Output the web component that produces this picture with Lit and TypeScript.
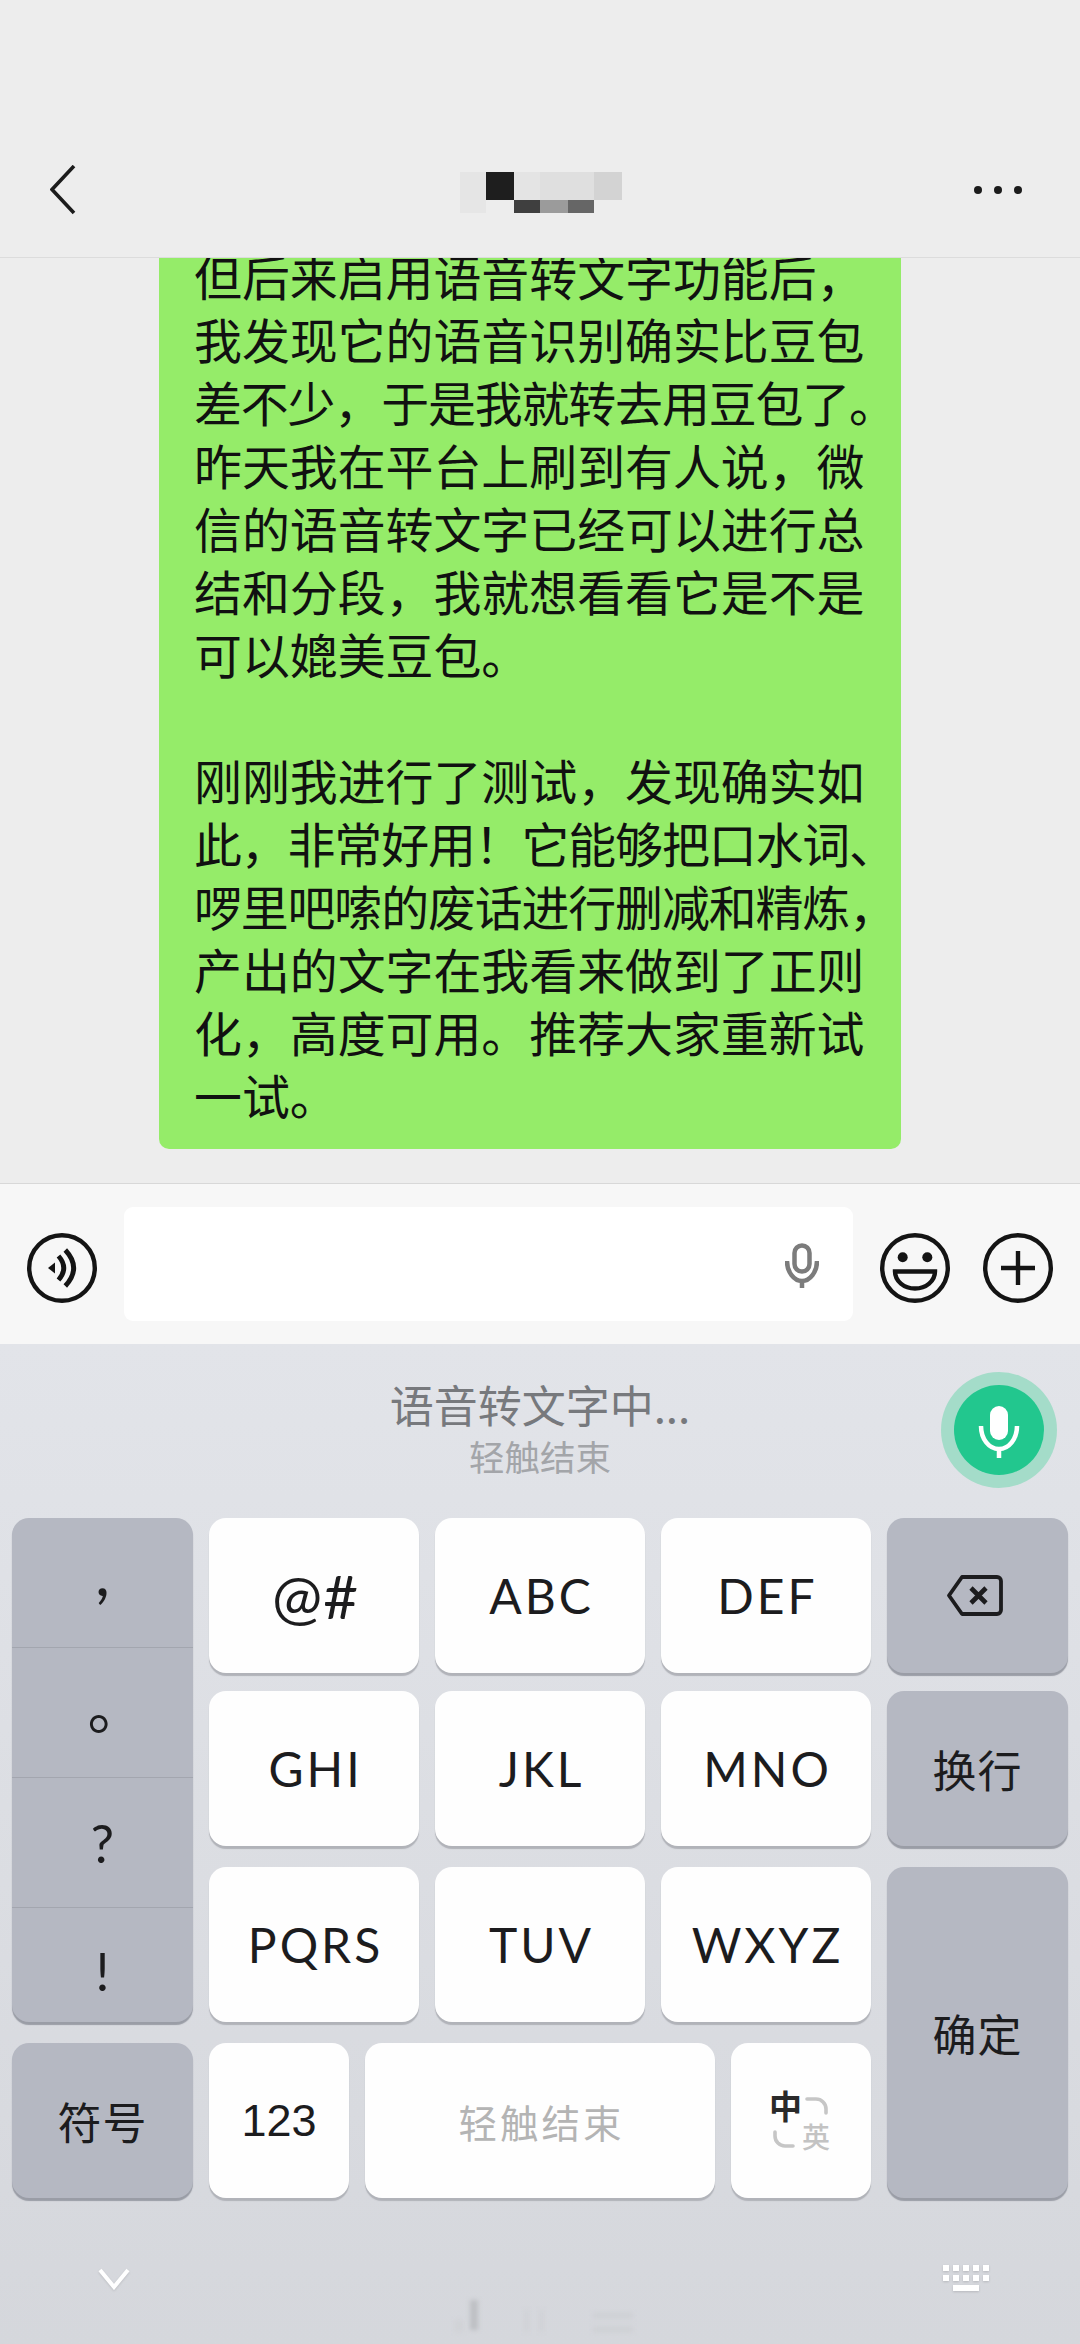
import { LitElement, html, css, svg, unsafeCSS } from 'lit';
import { customElement } from 'lit/decorators.js';

const CJK = unsafeCSS(`"Noto Sans CJK SC", "Noto Sans", sans-serif`);

const LINES = [
  '但后来启用语音转文字功能后，',
  '我发现它的语音识别确实比豆包',
  '差不少，于是我就转去用豆包了。',
  '昨天我在平台上刷到有人说，微',
  '信的语音转文字已经可以进行总',
  '结和分段，我就想看看它是不是',
  '可以媲美豆包。',
  '',
  '刚刚我进行了测试，发现确实如',
  '此，非常好用！它能够把口水词、',
  '啰里吧嗦的废话进行删减和精炼，',
  '产出的文字在我看来做到了正则',
  '化，高度可用。推荐大家重新试',
  '一试。',
];

// pixelated contact name, two rows of six cells
const MOSAIC = [
  '#e5e5e5', '#1e1e1e', '#e4e4e4', '#dfdfdf', '#dfdfdf', '#d3d3d3',
  '#e6e6e6', '#ededed', '#3f3f3f', '#9b9b9b', '#666666', '#ededed',
];

const LETTER_KEYS = [
  ['@#', 'a'],
  ['ABC', 'b'],
  ['DEF', 'c'],
  ['GHI', 'd'],
  ['JKL', 'e'],
  ['MNO', 'f'],
  ['PQRS', 'g'],
  ['TUV', 'h'],
  ['WXYZ', 'i'],
];

@customElement('app-root')
export class AppRoot extends LitElement {
  static styles = css`
    :host {
      display: block;
      width: 1080px;
      height: 2344px;
      font-family: ${CJK};
      background: #ededed;
      overflow: hidden;
    }
    svg {
      display: block;
    }
    .page {
      display: flex;
      flex-direction: column;
      height: 2344px;
    }
    .header {
      flex: none;
      height: 258px;
      box-sizing: border-box;
      padding: 165px 57px 0 50px;
      display: flex;
      justify-content: space-between;
      align-items: flex-start;
      border-bottom: 1px solid #dcdcdc;
      position: relative;
    }
    .back {
      fill: none;
      stroke: #1c1c1c;
      stroke-width: 3.6;
    }
    .more {
      margin-top: 18px;
      fill: #1c1c1c;
    }
    .mosaic {
      position: absolute;
      left: 460px;
      top: 172px;
      display: grid;
      grid-template-columns: 26px 28px 26px 28px 26px 28px;
      grid-template-rows: 28px 13px;
    }
    .chat {
      flex: none;
      height: 925px;
      overflow: hidden;
      display: flex;
      flex-direction: column;
      justify-content: flex-end;
      align-items: flex-start;
      padding: 0 0 34px 159px;
      box-sizing: border-box;
    }
    .bubble {
      flex: none;
      width: 742px;
      box-sizing: border-box;
      padding: 17px 0 23px 35px;
      background: #95ec69;
      border-radius: 10px;
      color: #111;
      font-size: 47.9px;
      line-height: 63px;
      white-space: nowrap;
    }
    .line {
      height: 63px;
    }
    .line.tight {
      letter-spacing: -1.1px;
    }
    .inputbar {
      flex: none;
      height: 161px;
      box-sizing: border-box;
      border-top: 1px solid #d8d8d8;
      background: #f7f7f7;
      display: flex;
      align-items: center;
      padding: 0 0 0 27px;
    }
    .round {
      flex: none;
      margin-top: 8px;
      stroke: #141414;
      fill: none;
      stroke-width: 4.4;
    }
    .field {
      flex: none;
      width: 729px;
      height: 114px;
      margin: 0 27px 0 27px;
      background: #fff;
      border-radius: 9px;
      display: flex;
      align-items: center;
      justify-content: flex-end;
      padding-right: 34px;
      box-sizing: border-box;
    }
    .field svg {
      margin-top: 4px;
      fill: none;
      stroke: #7c7c7c;
      stroke-width: 4.5;
    }
    .gap {
      width: 33px;
      flex: none;
    }
    .keyboard {
      flex: 1;
      background: linear-gradient(#e2e4e9, #d5d7dc);
      display: flex;
      flex-direction: column;
    }
    .hint {
      flex: none;
      height: 174px;
      position: relative;
      display: flex;
      flex-direction: column;
      align-items: center;
      padding-top: 30px;
      box-sizing: border-box;
    }
    .hint-main {
      font-size: 44px;
      line-height: 60px;
      color: #77797d;
    }
    .hint-sub {
      font-size: 35.5px;
      line-height: 44px;
      color: #a3a5a9;
    }
    .voice {
      position: absolute;
      left: 941px;
      top: 28px;
      width: 116px;
      height: 116px;
      border-radius: 50%;
      background: #a4dcc9;
      display: flex;
      align-items: center;
      justify-content: center;
    }
    .voice-inner {
      width: 90px;
      height: 90px;
      border-radius: 50%;
      background: #22c78e;
      display: flex;
      align-items: center;
      justify-content: center;
    }
    .voice-inner svg {
      margin-top: 4px;
      fill: none;
      stroke: #fff;
      stroke-width: 4.5;
    }
    .voice-inner rect {
      fill: #fff;
      stroke: none;
    }
    .keys {
      flex: none;
      margin: 0 12px 3px;
      display: grid;
      grid-template-columns: 181px 210px 210px 210px 181px;
      grid-template-rows: 155px 18px 155px 21px 155px 21px 155px;
      column-gap: 16px;
      grid-template-areas:
        'p a b c del'
        'p . . . .'
        'p d e f nl'
        'p . . . .'
        'p g h i ok'
        '. . . . ok'
        'sym m m m ok';
    }
    .key {
      background: #fefefe;
      border-radius: 17px;
      box-shadow: 0 3px 1px #b1b3b9;
      display: flex;
      align-items: center;
      justify-content: center;
      color: #1c1c1e;
      font-family: Lato, ${CJK};
      font-size: 48px;
      letter-spacing: 3px;
      padding-left: 3px;
      box-sizing: border-box;
    }
    .key.at {
      font-size: 60px;
      letter-spacing: 1px;
    }
    .key.fn {
      background: #b5b8c2;
      box-shadow: 0 3px 1px #9a9da6;
      font-family: ${CJK};
      font-size: 44px;
      letter-spacing: 1px;
      padding-left: 0;
    }
    .punct {
      grid-area: p;
      background: #b5b8c2;
      border-radius: 17px;
      box-shadow: 0 3px 1px #9a9da6;
      display: grid;
      grid-template-rows: 129px 130px 130px 1fr;
      overflow: hidden;
      color: #1c1c1e;
      font-family: Lato, ${CJK};
    }
    .punct div {
      display: flex;
      align-items: center;
      justify-content: center;
      font-size: 52px;
      border-top: 1px solid #a3a6af;
    }
    .punct div:first-child {
      border-top: none;
    }
    .punct span {
      display: block;
    }
    .comma {
      font-size: 66px;
      font-weight: 400;
      transform: translateY(-12px);
    }
    .stop {
      font-size: 58px;
      transform: translate(14px, -9px);
    }
    .bang {
      transform: translateY(6px);
    }
    .mini {
      grid-area: m;
      display: flex;
      gap: 16px;
    }
    .w140 {
      flex: none;
      width: 140px;
    }
    .key.grow {
      flex: 1;
      font-family: ${CJK};
      font-size: 38.5px;
      color: #b4b4b4;
      letter-spacing: 3px;
    }
    .key.num {
      font-family: 'Liberation Sans', sans-serif;
      font-size: 45px;
      letter-spacing: 0;
      padding-left: 0;
    }
    .lang {
      position: relative;
    }
    .zh,
    .en {
      position: absolute;
      line-height: 1;
      letter-spacing: 0;
      font-family: ${CJK};
    }
    .zh {
      left: 38px;
      top: 46px;
      font-size: 33px;
      font-weight: 700;
      color: #2a2a2a;
    }
    .en {
      left: 71px;
      top: 79px;
      font-size: 28px;
      font-weight: 500;
      color: #c3c3c3;
    }
    .lang svg {
      position: absolute;
      left: 0;
      top: 0;
      fill: none;
      stroke: #c6c6c6;
      stroke-width: 3.6;
      stroke-linecap: round;
    }
    .del {
      grid-area: del;
    }
    .nl {
      grid-area: nl;
    }
    .ok {
      grid-area: ok;
    }
    .sym {
      grid-area: sym;
    }
    .del svg {
      margin-right: 5px;
      fill: none;
      stroke: #1c1c1e;
      stroke-width: 3.8;
      stroke-linejoin: round;
    }
    .footer {
      flex: 1;
      position: relative;
    }
    .down {
      position: absolute;
      left: 98px;
      top: 67px;
      fill: none;
      stroke: #fff;
      stroke-width: 4;
      filter: drop-shadow(0 1px 1px rgba(0, 0, 0, 0.12));
    }
    .kb {
      position: absolute;
      left: 943px;
      top: 64px;
      fill: #fff;
      filter: blur(0.6px) drop-shadow(0 1px 1px rgba(0, 0, 0, 0.14));
    }
    .indicator {
      position: absolute;
      left: 440px;
      top: 79px;
      filter: blur(2px);
    }
  `;

  private _backspace() {
    return html`<svg width="56" height="41" viewBox="0 0 56 41">
      <path d="M15 2H50a4 4 0 0 1 4 4V35a4 4 0 0 1-4 4H15L2 20.5Z" />
      <path d="M24 13L39 28M39 13L24 28" stroke-width="4.6" />
    </svg>`;
  }

  private _keyboardGlyph() {
    const cells = [];
    for (let row = 0; row < 2; row++) {
      for (let col = 0; col < 5; col++) {
        cells.push(svg`<rect x=${col * 10} y=${row * 10} width="6" height="6" />`);
      }
    }
    return html`<svg width="46" height="27" viewBox="0 0 46 27">
      ${cells}
      <rect x="10" y="20" width="26" height="6" />
    </svg>`;
  }

  render() {
    return html`
      <div class="page">
        <div class="header">
          <svg class="back" width="26" height="50" viewBox="0 0 26 50">
            <path d="M24 1L2 24.5L24 48" />
          </svg>
          <svg class="more" width="50" height="12" viewBox="0 0 50 12">
            <circle cx="5" cy="7" r="4" />
            <circle cx="25" cy="7" r="4" />
            <circle cx="45" cy="7" r="4" />
          </svg>
          <div class="mosaic">
            ${MOSAIC.map((c) => html`<span style=${`background:${c}`}></span>`)}
          </div>
        </div>

        <div class="chat">
          <div class="bubble">
            ${LINES.map((l) => html`<div class="line ${l.length > 14 ? 'tight' : ''}">${l}</div>`)}
          </div>
        </div>

        <div class="inputbar">
          <svg class="round" width="70" height="70" viewBox="0 0 70 70">
            <circle cx="35" cy="35" r="32.8" />
            <path d="M31.5 23Q42 35 31.5 47M38.3 17Q55 35 38.3 53" stroke-width="4.8" />
            <path d="M21 35l7-5.5v11z" fill="#141414" stroke="none" />
          </svg>
          <div class="field">
            <svg width="34" height="46" viewBox="0 0 34 46">
              <rect x="9.5" y="2.5" width="15" height="26" rx="7.5" />
              <path d="M2 18c0 11 7 20 15 20s15-9 15-20M17 38V45" />
            </svg>
          </div>
          <svg class="round" width="70" height="70" viewBox="0 0 70 70">
            <circle cx="35" cy="35" r="32.8" />
            <circle cx="22.7" cy="24.3" r="5" fill="#141414" stroke="none" />
            <circle cx="47.3" cy="24.3" r="5" fill="#141414" stroke="none" />
            <path d="M15 38.5H55C55 48 46 55.5 35 55.5S15 48 15 38.5Z" />
          </svg>
          <div class="gap"></div>
          <svg class="round" width="70" height="70" viewBox="0 0 70 70">
            <circle cx="35" cy="35" r="32.8" />
            <path d="M18 35H52M35 18V52" />
          </svg>
        </div>

        <div class="keyboard">
          <div class="hint">
            <div class="hint-main">语音转文字中...</div>
            <div class="hint-sub">轻触结束</div>
            <div class="voice">
              <div class="voice-inner">
                <svg width="42" height="52" viewBox="0 0 42 52">
                  <rect x="12" y="0" width="18" height="34" rx="9" />
                  <path d="M3 20c0 13 8 23 18 23s18-10 18-23M21 43V52" />
                </svg>
              </div>
            </div>
          </div>

          <div class="keys">
            <div class="punct">
              <div><span class="comma">,</span></div>
              <div><span class="stop">。</span></div>
              <div><span>?</span></div>
              <div><span class="bang">!</span></div>
            </div>
            ${LETTER_KEYS.map(
              ([label, area]) =>
                html`<div class="key ${label === '@#' ? 'at' : ''}" style=${`grid-area:${area}`}>${label}</div>`,
            )}
            <div class="key fn del">${this._backspace()}</div>
            <div class="key fn nl">换行</div>
            <div class="key fn ok">确定</div>
            <div class="key fn sym">符号</div>
            <div class="mini">
              <div class="key w140 num">123</div>
              <div class="key grow">轻触结束</div>
              <div class="key w140 lang">
                <span class="zh">中</span>
                <span class="en">英</span>
                <svg width="140" height="155" viewBox="0 0 140 155">
                  <path d="M76 56H85a10 10 0 0 1 10 10V70" />
                  <path d="M44 89V93a10 10 0 0 0 10 10H62" />
                </svg>
              </div>
            </div>
          </div>

          <div class="footer">
            <svg class="down" width="32" height="22" viewBox="0 0 32 22">
              <path d="M2 2L16 19L30 2" />
            </svg>
            <div class="kb">${this._keyboardGlyph()}</div>
            <svg class="indicator" width="200" height="64" viewBox="0 0 200 64">
              <rect x="15" y="40" width="8" height="12" fill="#d0d2d6" />
              <rect x="30" y="20" width="8" height="30" fill="#bec0c4" />
              <rect x="85" y="30" width="3" height="22" fill="#ced0d4" />
              <rect x="100" y="30" width="3" height="22" fill="#ced0d4" />
              <rect x="153" y="33" width="40" height="5" fill="#ced0d4" />
              <rect x="153" y="47" width="40" height="5" fill="#ced0d4" />
            </svg>
          </div>
        </div>
      </div>
    `;
  }
}
